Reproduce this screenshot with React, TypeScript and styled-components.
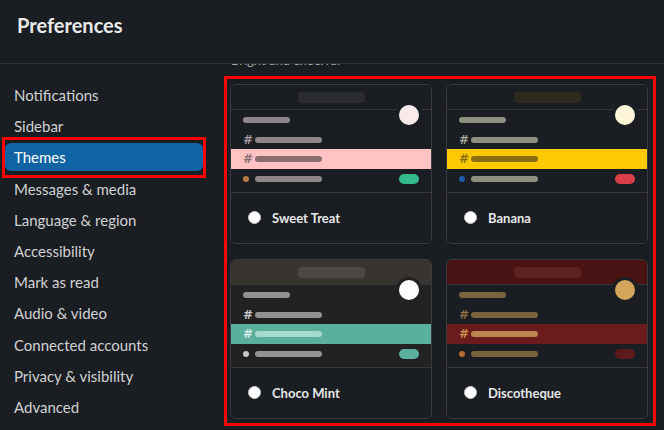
import styled, { createGlobalStyle } from "styled-components";

const GlobalStyle = createGlobalStyle`
    html, body {
        margin: 0;
        padding: 0;
        height: 100%;
        overflow: hidden;
        background: #1a1d21;
    }
    body {
        font-family: Lato, "Noto Sans", "Liberation Sans", sans-serif;
        color: #d1d2d3;
    }
    * { box-sizing: border-box; }
`;

const Page = styled.div`
    width: 664px;
    height: 430px;
    display: flex;
    flex-direction: column;
    background: #1a1d21;
`;

const Header = styled.div`
    height: 64px;
    flex-shrink: 0;
    padding: 11px 17px 0;
    border-bottom: 1px solid #313337;
    font-size: 20px;
    font-weight: 700;
    line-height: 28px;
    color: #e9e9ea;
`;

const Body = styled.div`
    flex: 1;
    display: flex;
    min-height: 0;
`;

const Sidebar = styled.nav`
    width: 208px;
    flex-shrink: 0;
    padding: 17px 5px 0;
    display: flex;
    flex-direction: column;
    gap: 3.2px;
`;

const NavItem = styled.div<{ $active?: boolean }>`
    position: relative;
    height: 28px;
    padding-left: 9px;
    display: flex;
    align-items: center;
    font-size: 15px;
    border-radius: 6px;
    color: ${(p) => (p.$active ? "#ffffff" : "#d1d2d3")};
    background: ${(p) => (p.$active ? "#1164a3" : "transparent")};

    ${(p) =>
        p.$active &&
        `
        &::after {
            content: "";
            position: absolute;
            top: -6px;
            bottom: -7px;
            left: -3px;
            right: -3px;
            border: 3px solid #ff0000;
        }
    `}
`;

const Content = styled.div`
    flex: 1;
    overflow: hidden;
    padding-left: 16px;
`;

/* the list is scrolled: only the foot of this heading peeks out under the header */
const SectionTitle = styled.div`
    margin-top: -12px;
    padding-left: 7px;
    font-size: 13px;
    line-height: 16px;
    color: #abacad;
`;

const Highlight = styled.div`
    margin-top: 8px;
    width: 432px;
    border: 3px solid #ff0000;
    padding: 5px 5px 4px 3px;
    display: grid;
    grid-template-columns: 202px 202px;
    column-gap: 14px;
    row-gap: 15px;
`;

const Card = styled.div`
    position: relative;
    height: 160px;
    border: 1px solid #393b3f;
    border-radius: 6px;
    overflow: hidden;
    display: flex;
    flex-direction: column;
`;

const CardTop = styled.div<{ $bg: string }>`
    height: 25px;
    flex-shrink: 0;
    background: ${(p) => p.$bg};
    border-bottom: 1px solid #36383c;
    display: flex;
    align-items: center;
    justify-content: center;
`;

const TopPill = styled.div<{ $bg: string }>`
    width: 67px;
    height: 11px;
    border-radius: 4px;
    background: ${(p) => p.$bg};
`;

const Avatar = styled.div<{ $bg: string; $ring: string }>`
    position: absolute;
    top: 17px;
    right: 9px;
    width: 26px;
    height: 26px;
    border-radius: 50%;
    background: ${(p) => p.$bg};
    border: 3px solid ${(p) => p.$ring};
`;

const Rows = styled.div<{ $bg: string }>`
    height: 83px;
    flex-shrink: 0;
    background: ${(p) => p.$bg};
    border-bottom: 1px solid #36383c;
    padding-bottom: 4px;
    display: flex;
    flex-direction: column;
`;

const Row = styled.div<{ $h: number; $bg?: string }>`
    height: ${(p) => p.$h}px;
    padding: 0 12px;
    display: flex;
    align-items: center;
    background: ${(p) => p.$bg || "transparent"};
`;

const Hash = styled.span<{ $color: string }>`
    width: 12px;
    font-family: "DejaVu Sans", sans-serif;
    font-size: 12px;
    font-weight: 700;
    line-height: 1;
    color: ${(p) => p.$color};
`;

const Dot = styled.span<{ $color: string }>`
    width: 6px;
    height: 6px;
    margin: 0 6px 0 0;
    border-radius: 50%;
    background: ${(p) => p.$color};
`;

const Bar = styled.span<{ $color: string; $w: number }>`
    width: ${(p) => p.$w}px;
    height: 6px;
    border-radius: 3px;
    background: ${(p) => p.$color};
`;

const Badge = styled.span<{ $color: string }>`
    margin-left: auto;
    width: 20px;
    height: 10px;
    border-radius: 5px;
    background: ${(p) => p.$color};
`;

const CardFoot = styled.div`
    flex: 1;
    display: flex;
    align-items: center;
    padding-left: 17px;
    gap: 11px;
    background: #1a1d21;
`;

const Radio = styled.span`
    width: 13px;
    height: 13px;
    border-radius: 50%;
    background: #ffffff;
    border: 1px solid #c9c9c9;
    margin-top: -2px;
`;

const ThemeName = styled.span`
    font-size: 13px;
    font-weight: 700;
    color: #e6e7e8;
`;

type Theme = {
    name: string;
    topBg: string;
    topPill: string;
    rowsBg: string;
    bar: string;
    hash: string;
    selBg: string;
    selBar: string;
    selHash: string;
    dot: string;
    badge: string;
    avatar: string;
};

const themes: Theme[] = [
    {
        name: "Sweet Treat",
        topBg: "#1a1d21",
        topPill: "#2b2c2e",
        rowsBg: "#1a1d21",
        bar: "#8e8689",
        hash: "#a39b9e",
        selBg: "#ffc3c3",
        selBar: "#8a6e72",
        selHash: "#8a6e72",
        dot: "#b67a45",
        badge: "#33b98a",
        avatar: "#f9eaeb",
    },
    {
        name: "Banana",
        topBg: "#1a1d21",
        topPill: "#2e2a1f",
        rowsBg: "#1a1d21",
        bar: "#8f8f81",
        hash: "#a6a699",
        selBg: "#fec803",
        selBar: "#8a6d10",
        selHash: "#8a6d10",
        dot: "#1d5bab",
        badge: "#da4049",
        avatar: "#fff6d9",
    },
    {
        name: "Choco Mint",
        topBg: "#383531",
        topPill: "#4b4946",
        rowsBg: "#222222",
        bar: "#929292",
        hash: "#c8c8c8",
        selBg: "#5bb09d",
        selBar: "#a8d9cf",
        selHash: "#d8efea",
        dot: "#c6c6c6",
        badge: "#5bb09d",
        avatar: "#ffffff",
    },
    {
        name: "Discotheque",
        topBg: "#4a1313",
        topPill: "#5d2220",
        rowsBg: "#1a1d21",
        bar: "#7a6440",
        hash: "#8b6f45",
        selBg: "#6a1b1b",
        selBar: "#b9864f",
        selHash: "#c7924f",
        dot: "#b96b32",
        badge: "#5d1a1a",
        avatar: "#d4a55c",
    },
];

const navItems = [
    "Notifications",
    "Sidebar",
    "Themes",
    "Messages & media",
    "Language & region",
    "Accessibility",
    "Mark as read",
    "Audio & video",
    "Connected accounts",
    "Privacy & visibility",
    "Advanced",
];

function ThemeCard({ t }: { t: Theme }) {
    return (
        <Card>
            <CardTop $bg={t.topBg}>
                <TopPill $bg={t.topPill} />
            </CardTop>
            <Avatar $bg={t.avatar} $ring={t.rowsBg} />
            <Rows $bg={t.rowsBg}>
                <Row $h={20}>
                    <Bar $color={t.bar} $w={47} />
                </Row>
                <Row $h={19}>
                    <Hash $color={t.hash}>#</Hash>
                    <Bar $color={t.bar} $w={67} />
                </Row>
                <Row $h={20} $bg={t.selBg}>
                    <Hash $color={t.selHash}>#</Hash>
                    <Bar $color={t.selBar} $w={67} />
                </Row>
                <Row $h={19}>
                    <Dot $color={t.dot} />
                    <Bar $color={t.bar} $w={67} />
                    <Badge $color={t.badge} />
                </Row>
            </Rows>
            <CardFoot>
                <Radio />
                <ThemeName>{t.name}</ThemeName>
            </CardFoot>
        </Card>
    );
}

export default function App() {
    return (
        <>
            <GlobalStyle />
            <Page>
                <Header>Preferences</Header>
                <Body>
                    <Sidebar>
                        {navItems.map((item) => (
                            <NavItem key={item} $active={item === "Themes"}>
                                {item}
                            </NavItem>
                        ))}
                    </Sidebar>
                    <Content>
                        <SectionTitle>Bright and cheerful</SectionTitle>
                        <Highlight>
                            {themes.map((t) => (
                                <ThemeCard key={t.name} t={t} />
                            ))}
                        </Highlight>
                    </Content>
                </Body>
            </Page>
        </>
    );
}
